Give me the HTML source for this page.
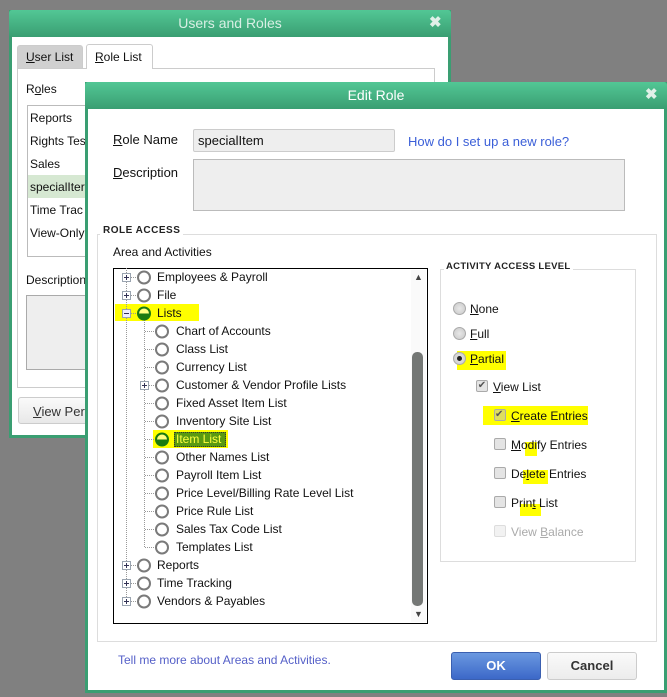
<!DOCTYPE html>
<html><head><meta charset="utf-8">
<style>
*{margin:0;padding:0;box-sizing:border-box}
body{width:667px;height:697px;background:#808080;position:relative;overflow:hidden;font-family:"Liberation Sans",Arial,sans-serif;font-size:12px;color:#111}
.a{position:absolute;white-space:nowrap}
.win{position:absolute;background:#fff;border:3px solid #3a9e72;border-top:none}
.tb{position:absolute;background:linear-gradient(#52c795,#3a9e72);color:#fff;text-align:center;font-size:14px}
u{text-decoration:underline}
.circ{position:absolute;width:13px;height:13px;border:2px solid #7a7a7a;border-radius:50%;background:#fff}
.pl{position:absolute;width:9px;height:9px;border:1px solid #9aa;background:#fff;font-size:9px;line-height:7px;text-align:center;color:#335}
.cb{position:absolute;width:12px;height:12px;border:1px solid #aaa;background:#e4e4e4;border-radius:2px}
.rd{position:absolute;width:13px;height:13px;border:1px solid #aaa;border-radius:50%;background:radial-gradient(#e8e8e8,#c8c8c8)}
.hl{position:absolute;background:#ffff00}
</style></head><body>

<!-- Users and Roles window -->
<div class="win" style="left:9px;top:10px;width:442px;height:428px"></div>
<div class="tb" style="left:9px;top:10px;width:442px;height:27px;line-height:27px;color:#d8efe4;border-radius:3px 3px 0 0">Users and Roles</div>
<div class="a" style="left:429px;top:13px;color:#e0f0e8;font-size:15px;font-weight:bold">✖</div>
<div class="a" style="left:17px;top:45px;width:66px;height:24px;background:#d0d0d0;border:1px solid #ccc;border-bottom:none;border-radius:3px 3px 0 0;padding:4px 0 0 8px"><u>U</u>ser List</div>
<div class="a" style="left:17px;top:68px;width:418px;height:320px;border:1px solid #ccc"></div>
<div class="a" style="left:86px;top:44px;width:67px;height:25px;background:#fff;border:1px solid #ccc;border-bottom:none;border-radius:3px 3px 0 0;padding:5px 0 0 8px"><u>R</u>ole List</div>
<div class="a" style="left:26px;top:82px">R<u>o</u>les</div>
<div class="a" style="left:27px;top:105px;width:80px;height:152px;border:1px solid #bbb"></div>
<div class="a" style="left:30px;top:111px">Reports</div>
<div class="a" style="left:30px;top:134px">Rights Tes</div>
<div class="a" style="left:30px;top:157px">Sales</div>
<div class="a" style="left:28px;top:175px;width:60px;height:23px;background:#d6e8d2"></div>
<div class="a" style="left:30px;top:180px">specialIter</div>
<div class="a" style="left:30px;top:203px">Time Trac</div>
<div class="a" style="left:30px;top:226px">View-Only</div>
<div class="a" style="left:26px;top:273px">Description</div>
<div class="a" style="left:26px;top:295px;width:70px;height:75px;border:1px solid #aaa;background:#eee"></div>
<div class="a" style="left:18px;top:397px;width:80px;height:27px;border:1px solid #ccc;border-radius:3px;background:linear-gradient(#fafafa,#e8e8e8);padding:6px 0 0 14px;font-size:13px;color:#333"><u>V</u>iew Perm</div>

<!-- Edit Role window -->
<div class="win" style="left:85px;top:82px;width:582px;height:611px;border-width:3px"></div>
<div class="tb" style="left:85px;top:82px;width:582px;height:27px;line-height:27px;border-radius:3px 3px 0 0">Edit Role</div>
<div class="a" style="left:645px;top:85px;color:#e0f0e8;font-size:15px;font-weight:bold">✖</div>

<div class="a" style="left:113px;top:132px;font-size:13px"><u>R</u>ole Name</div>
<div class="a" style="left:193px;top:129px;width:202px;height:23px;border:1px solid #ccc;background:#eee;border-radius:2px;padding:3px 0 0 4px;font-size:13px">specialItem</div>
<div class="a" style="left:408px;top:134px;color:#3b5fd8;font-size:13px">How do I set up a new role?</div>
<div class="a" style="left:113px;top:165px;font-size:13px"><u>D</u>escription</div>
<div class="a" style="left:193px;top:159px;width:432px;height:52px;border:1px solid #bbb;background:#eee"></div>

<div class="a" style="left:97px;top:234px;width:560px;height:408px;border:1px solid #ddd"></div>
<div class="a" style="left:100px;top:225px;background:#fff;padding:0 3px;font-size:10px;font-weight:bold;letter-spacing:.5px;color:#222">ROLE ACCESS</div>
<div class="a" style="left:113px;top:245px">Area and Activities</div>

<!-- tree -->
<div class="a" style="left:113px;top:268px;width:315px;height:356px;border:1px solid #000;background:#fff"></div>
<div class="a" style="left:411px;top:270px;width:15px;height:352px;background:#fafafa"></div>
<div class="a" style="left:414px;top:272px;font-size:9px;color:#444">▲</div>
<div class="a" style="left:414px;top:609px;font-size:9px;color:#444">▼</div>
<div class="a" style="left:412px;top:352px;width:11px;height:254px;background:#747775;border-radius:5px"></div>

<div class="hl" style="left:115px;top:304px;width:84px;height:17px"></div>
<div class="hl" style="left:153px;top:430px;width:75px;height:18px"></div>
<div class="a" style="left:174px;top:432px;width:52px;height:15px;background:#5a9a10;border:1px dotted #333"></div>

<svg class="a" style="left:113px;top:268px" width="300" height="356">
<g stroke="#999" stroke-dasharray="1,1" fill="none">
<line x1="13.5" y1="0" x2="13.5" y2="334"/>
<line x1="31.5" y1="52" x2="31.5" y2="280"/>
<line x1="14" y1="9.5" x2="26" y2="9.5"/><line x1="14" y1="27.5" x2="26" y2="27.5"/><line x1="14" y1="45.5" x2="26" y2="45.5"/>
<line x1="14" y1="297.5" x2="26" y2="297.5"/><line x1="14" y1="315.5" x2="26" y2="315.5"/><line x1="14" y1="333.5" x2="26" y2="333.5"/>
<line x1="32" y1="63.5" x2="44" y2="63.5"/><line x1="32" y1="81.5" x2="44" y2="81.5"/><line x1="32" y1="99.5" x2="44" y2="99.5"/><line x1="32" y1="117.5" x2="44" y2="117.5"/><line x1="32" y1="135.5" x2="44" y2="135.5"/><line x1="32" y1="153.5" x2="44" y2="153.5"/><line x1="32" y1="171.5" x2="44" y2="171.5"/><line x1="32" y1="189.5" x2="44" y2="189.5"/><line x1="32" y1="207.5" x2="44" y2="207.5"/><line x1="32" y1="225.5" x2="44" y2="225.5"/><line x1="32" y1="243.5" x2="44" y2="243.5"/><line x1="32" y1="261.5" x2="44" y2="261.5"/><line x1="32" y1="279.5" x2="44" y2="279.5"/>
</g>
<g fill="#fff" stroke="#7a7a7a" stroke-width="2">
<circle cx="31" cy="9.5" r="6"/><circle cx="31" cy="27.5" r="6"/>
<circle cx="31" cy="297.5" r="6"/><circle cx="31" cy="315.5" r="6"/><circle cx="31" cy="333.5" r="6"/>
<circle cx="49" cy="63.5" r="6"/><circle cx="49" cy="81.5" r="6"/><circle cx="49" cy="99.5" r="6"/><circle cx="49" cy="117.5" r="6"/><circle cx="49" cy="135.5" r="6"/><circle cx="49" cy="153.5" r="6"/><circle cx="49" cy="189.5" r="6"/><circle cx="49" cy="207.5" r="6"/><circle cx="49" cy="225.5" r="6"/><circle cx="49" cy="243.5" r="6"/><circle cx="49" cy="261.5" r="6"/><circle cx="49" cy="279.5" r="6"/>
</g>
<g>
<path d="M25 45.5 L27 40 L35 40 L37 45.5 Z" fill="#ffff80"/><path d="M25 45.5 L37 45.5 L35 51 L27 51 Z" fill="#1a7a10"/><circle cx="31" cy="45.5" r="6" fill="none" stroke="#1a7a10" stroke-width="2"/>
<path d="M43 171.5 L45 166 L53 166 L55 171.5 Z" fill="#ffff80"/><path d="M43 171.5 L55 171.5 L53 177 L45 177 Z" fill="#1a7a10"/><circle cx="49" cy="171.5" r="6" fill="none" stroke="#1a7a10" stroke-width="2"/>
</g>
<g stroke="#9aa4b0" fill="#fff">
<rect x="9.5" y="5.5" width="8" height="8"/><rect x="9.5" y="23.5" width="8" height="8"/><rect x="9.5" y="41.5" width="8" height="8" fill="#eef"/>
<rect x="9.5" y="293.5" width="8" height="8"/><rect x="9.5" y="311.5" width="8" height="8"/><rect x="9.5" y="329.5" width="8" height="8"/>
<rect x="27.5" y="113.5" width="8" height="8"/>
</g>
<g stroke="#335" stroke-width="1">
<path d="M11 9.5h5M13.5 7v5M11 27.5h5M13.5 25v5M11 45.5h5M11 297.5h5M13.5 295v5M11 315.5h5M13.5 313v5M11 333.5h5M13.5 331v5M29 117.5h5M31.5 115v5"/>
</g>
</svg>
<div class="a" style="left:157px;top:270px">Employees &amp; Payroll</div>
<div class="a" style="left:157px;top:288px">File</div>
<div class="a" style="left:157px;top:306px">Lists</div>
<div class="a" style="left:176px;top:324px">Chart of Accounts</div>
<div class="a" style="left:176px;top:342px">Class List</div>
<div class="a" style="left:176px;top:360px">Currency List</div>
<div class="a" style="left:176px;top:378px">Customer &amp; Vendor Profile Lists</div>
<div class="a" style="left:176px;top:396px">Fixed Asset Item List</div>
<div class="a" style="left:176px;top:414px">Inventory Site List</div>
<div class="a" style="left:176px;top:432px;color:#ffff40">Item List</div>
<div class="a" style="left:176px;top:450px">Other Names List</div>
<div class="a" style="left:176px;top:468px">Payroll Item List</div>
<div class="a" style="left:176px;top:486px">Price Level/Billing Rate Level List</div>
<div class="a" style="left:176px;top:504px">Price Rule List</div>
<div class="a" style="left:176px;top:522px">Sales Tax Code List</div>
<div class="a" style="left:176px;top:540px">Templates List</div>
<div class="a" style="left:157px;top:558px">Reports</div>
<div class="a" style="left:157px;top:576px">Time Tracking</div>
<div class="a" style="left:157px;top:594px">Vendors &amp; Payables</div>

<!-- activity access -->
<div class="a" style="left:440px;top:269px;width:196px;height:293px;border:1px solid #ddd"></div>
<div class="a" style="left:444px;top:261px;background:#fff;padding:0 2px;font-size:9.5px;font-weight:bold;letter-spacing:.3px;color:#222">ACTIVITY ACCESS LEVEL</div>
<div class="hl" style="left:457px;top:351px;width:49px;height:19px"></div>
<div class="hl" style="left:483px;top:406px;width:105px;height:19px"></div>
<div class="hl" style="left:525px;top:442px;width:12px;height:14px"></div>
<div class="hl" style="left:523px;top:470px;width:25px;height:14px"></div>
<div class="hl" style="left:520px;top:504px;width:21px;height:12px"></div>
<div class="rd" style="left:453px;top:302px"></div>
<div class="a" style="left:470px;top:302px"><u>N</u>one</div>
<div class="rd" style="left:453px;top:327px"></div>
<div class="a" style="left:470px;top:327px"><u>F</u>ull</div>
<div class="rd" style="left:453px;top:352px"><div style="width:5px;height:5px;border-radius:50%;background:#222;margin:3px 0 0 3px"></div></div>
<div class="a" style="left:470px;top:352px"><u>P</u>artial</div>
<div class="cb" style="left:476px;top:380px;font-size:10px;line-height:10px;text-align:center;color:#555">✔</div>
<div class="a" style="left:493px;top:380px"><u>V</u>iew List</div>
<div class="cb" style="left:494px;top:409px;font-size:10px;line-height:10px;text-align:center;color:#555;background:#dede60"></div>
<div class="a" style="left:495px;top:409px;font-size:10px;color:#555">✔</div>
<div class="a" style="left:511px;top:409px"><u>C</u>reate Entries</div>
<div class="cb" style="left:494px;top:438px"></div>
<div class="a" style="left:511px;top:438px"><u>M</u>odify Entries</div>
<div class="cb" style="left:494px;top:467px"></div>
<div class="a" style="left:511px;top:467px">De<u>l</u>ete Entries</div>
<div class="cb" style="left:494px;top:496px"></div>
<div class="a" style="left:511px;top:496px">Prin<u>t</u> List</div>
<div class="cb" style="left:494px;top:525px;border-color:#ddd;background:#f2f2f2"></div>
<div class="a" style="left:511px;top:525px;color:#aaa">View <u>B</u>alance</div>

<div class="a" style="left:118px;top:653px;color:#5560c8">Tell me more about Areas and Activities.</div>
<div class="a" style="left:451px;top:652px;width:90px;height:28px;border:1px solid #3a5fb0;border-radius:3px;background:linear-gradient(#6a98e0,#3c68c8);color:#fff;font-weight:bold;text-align:center;line-height:26px;font-size:13px">OK</div>
<div class="a" style="left:547px;top:652px;width:90px;height:28px;border:1px solid #ccc;border-radius:3px;background:linear-gradient(#fafafa,#ececec);color:#333;font-weight:bold;text-align:center;line-height:26px;font-size:13px">Cancel</div>
</body></html>
